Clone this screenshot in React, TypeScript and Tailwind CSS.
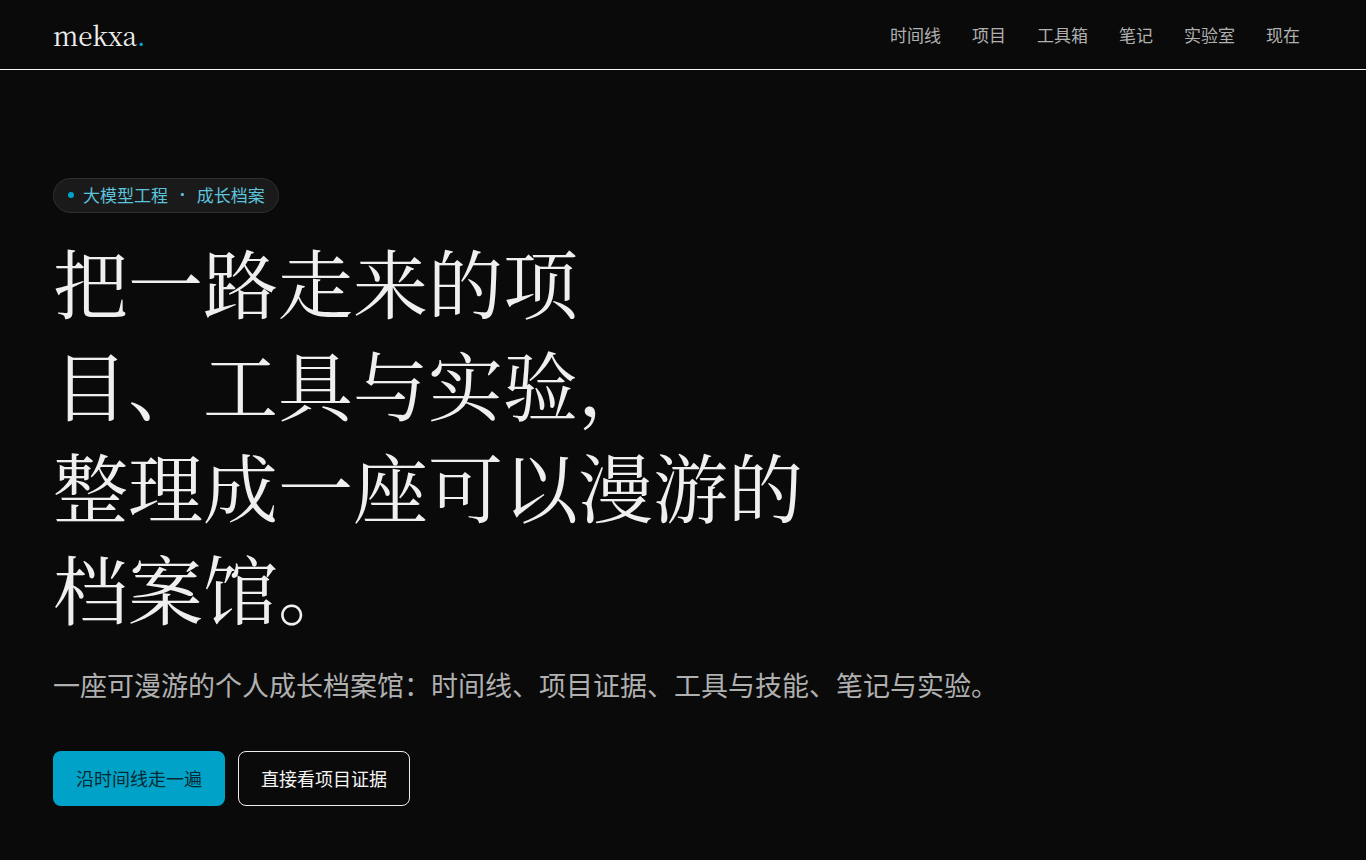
const NAV = [
  { label: '时间线', href: '#timeline' },
  { label: '项目', href: '#projects' },
  { label: '工具箱', href: '#toolbox' },
  { label: '笔记', href: '#notes' },
  { label: '实验室', href: '#lab' },
  { label: '现在', href: '#now' },
]

function Header() {
  return (
    <header className="flex items-center justify-between border-b border-[#f5f5f5] pl-[53px] pr-[66px] py-[14px]">
      <a
        href="#top"
        className="font-['Noto_Serif_CJK_SC','Noto_Serif','Liberation_Serif',serif] text-[26px] leading-[41px] text-[#ededed]"
      >
        mekxa<span className="text-[#00a3d7]">.</span>
      </a>
      <nav className="flex gap-[31px] text-[17px] leading-6 text-[#b0b0b0]">
        {NAV.map((item) => (
          <a key={item.href} href={item.href}>
            {item.label}
          </a>
        ))}
      </nav>
    </header>
  )
}

function Hero() {
  return (
    <section id="top" className="flex flex-col items-start px-[53px] pt-[108px] pb-[54px]">
      <p className="flex items-center gap-[9px] rounded-full border border-[#303030] bg-[#1a1a1a] pl-[14px] pr-[13px] pt-1 pb-[5px] text-[17px] leading-6 text-[#5cc4dc]">
        <span className="size-[6px] rounded-full bg-[#00a3c7]" />
        <span className="flex gap-3">
          <span>大模型工程</span>
          <span className="font-['Noto_Sans',sans-serif] font-bold">·</span>
          <span>成长档案</span>
        </span>
      </p>
      <h1 className="mt-[17px] font-['Noto_Serif_CJK_SC','Noto_Serif','Liberation_Serif',serif] text-[75px] leading-[102px] text-[#efefef]">
        把一路走来的项
        <br />
        目、工具与实验，
        <br />
        整理成一座可以漫游的
        <br />
        档案馆。
      </h1>
      <p className="mt-6 text-[27px] leading-[46px] text-[#b0b0b0]">
        一座可漫游的个人成长档案馆：时间线、项目证据、工具与技能、笔记与实验。
      </p>
      <div className="mt-[43px] flex gap-[13px] text-[18px] leading-[27px]">
        <a href="#timeline" className="rounded-lg bg-[#00a3c7] px-[23px] py-[14px] text-[#062a33]">
          沿时间线走一遍
        </a>
        <a href="#projects" className="rounded-lg border border-[#ededed] px-[22px] py-[13px] text-[#f5f5f5]">
          直接看项目证据
        </a>
      </div>
    </section>
  )
}

export default function App() {
  return (
    <div
      lang="zh-CN"
      className="min-h-screen bg-[#0a0a0a] font-['Noto_Sans_CJK_SC',sans-serif] text-[#f5f5f5]"
    >
      <Header />
      <main>
        <Hero />
      </main>
    </div>
  )
}
